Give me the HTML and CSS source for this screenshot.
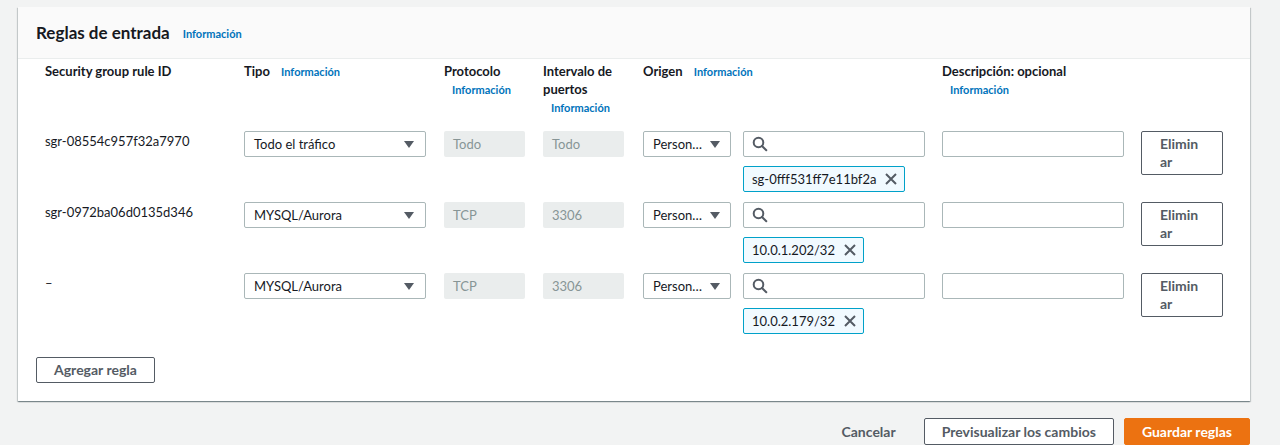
FILE: index.html
```html
<!DOCTYPE html>
<html lang="es">
<head>
<meta charset="utf-8">
<title>Reglas de entrada</title>
<link rel="stylesheet" href="styles.css">
</head>
<body>
<div class="page">
  <section class="card">
    <header class="card-header">
      <h2 class="title">Reglas de entrada</h2>
      <a class="info info-title">Información</a>
    </header>
    <div class="rules">
      <div class="grid head">
        <div class="h c-id">Security group rule ID</div>
        <div class="h c-type">Tipo <a class="info">Información</a></div>
        <div class="h c-proto">Protocolo <a class="info">Información</a></div>
        <div class="h c-port">Intervalo de puertos <a class="info">Información</a></div>
        <div class="h c-origin">Origen <a class="info">Información</a></div>
        <div class="h c-desc">Descripción: opcional <a class="info">Información</a></div>
        <div class="h c-del"></div>
      </div>

      <div class="grid row">
        <div class="c-id idtext">sgr-08554c957f32a7970</div>
        <div class="c-type"><div class="select wide"><span>Todo el tráfico</span><i class="caret"></i></div></div>
        <div class="c-proto"><div class="disabled">Todo</div></div>
        <div class="c-port"><div class="disabled">Todo</div></div>
        <div class="c-src"><div class="select narrow"><span>Person…</span><i class="caret"></i></div></div>
        <div class="c-search">
          <div class="search"><svg class="mag" viewBox="0 0 16 16" width="16" height="16"><circle cx="6.5" cy="6.5" r="4.8" fill="none" stroke="#545b64" stroke-width="2"/><path d="M10 10l4.3 4.3" stroke="#545b64" stroke-width="2" stroke-linecap="round"/></svg></div>
          <div class="tag">sg-0fff531ff7e11bf2a<svg class="x" viewBox="0 0 12 12" width="12" height="12"><path d="M1 1l10 10M11 1L1 11" stroke="#545b64" stroke-width="2"/></svg></div>
        </div>
        <div class="c-desc"><div class="input"></div></div>
        <div class="c-del"><button class="btn del">Eliminar</button></div>
      </div>

      <div class="grid row">
        <div class="c-id idtext">sgr-0972ba06d0135d346</div>
        <div class="c-type"><div class="select wide"><span>MYSQL/Aurora</span><i class="caret"></i></div></div>
        <div class="c-proto"><div class="disabled">TCP</div></div>
        <div class="c-port"><div class="disabled">3306</div></div>
        <div class="c-src"><div class="select narrow"><span>Person…</span><i class="caret"></i></div></div>
        <div class="c-search">
          <div class="search"><svg class="mag" viewBox="0 0 16 16" width="16" height="16"><circle cx="6.5" cy="6.5" r="4.8" fill="none" stroke="#545b64" stroke-width="2"/><path d="M10 10l4.3 4.3" stroke="#545b64" stroke-width="2" stroke-linecap="round"/></svg></div>
          <div class="tag">10.0.1.202/32<svg class="x" viewBox="0 0 12 12" width="12" height="12"><path d="M1 1l10 10M11 1L1 11" stroke="#545b64" stroke-width="2"/></svg></div>
        </div>
        <div class="c-desc"><div class="input"></div></div>
        <div class="c-del"><button class="btn del">Eliminar</button></div>
      </div>

      <div class="grid row">
        <div class="c-id idtext">–</div>
        <div class="c-type"><div class="select wide"><span>MYSQL/Aurora</span><i class="caret"></i></div></div>
        <div class="c-proto"><div class="disabled">TCP</div></div>
        <div class="c-port"><div class="disabled">3306</div></div>
        <div class="c-src"><div class="select narrow"><span>Person…</span><i class="caret"></i></div></div>
        <div class="c-search">
          <div class="search"><svg class="mag" viewBox="0 0 16 16" width="16" height="16"><circle cx="6.5" cy="6.5" r="4.8" fill="none" stroke="#545b64" stroke-width="2"/><path d="M10 10l4.3 4.3" stroke="#545b64" stroke-width="2" stroke-linecap="round"/></svg></div>
          <div class="tag">10.0.2.179/32<svg class="x" viewBox="0 0 12 12" width="12" height="12"><path d="M1 1l10 10M11 1L1 11" stroke="#545b64" stroke-width="2"/></svg></div>
        </div>
        <div class="c-desc"><div class="input"></div></div>
        <div class="c-del"><button class="btn del">Eliminar</button></div>
      </div>
    </div>
    <div class="card-foot">
      <button class="btn add">Agregar regla</button>
    </div>
  </section>
  <footer class="actions">
    <button class="btn link">Cancelar</button>
    <button class="btn normal">Previsualizar los cambios</button>
    <button class="btn primary">Guardar reglas</button>
  </footer>
</div>
</body>
</html>
```

FILE: styles.css
```css
* { box-sizing: border-box; }
html, body { margin: 0; padding: 0; }
body {
  background: #f2f3f3;
  font-family: Lato, "Open Sans", sans-serif;
  color: #16191f;
  font-size: 14px;
  line-height: 18px;
  overflow: hidden;
}
.page {
  width: 1250px;
  padding: 7px 0 0 18px;
}
.card {
  background: #fff;
  box-shadow: 0 1px 1px 0 rgba(0,28,36,.3), 1px 1px 1px 0 rgba(0,28,36,.15), -1px 1px 1px 0 rgba(0,28,36,.15);
}
.card-header {
  height: 52px;
  background: #fafafa;
  border-bottom: 1px solid #eaeded;
  display: flex;
  align-items: center;
  padding: 0 18px;
}
.title {
  margin: 0;
  font-size: 17px;
  font-weight: 700;
  line-height: 22px;
}
.info {
  color: #0073bb;
  font-size: 11px;
  font-weight: 700;
  display: inline-block;
  padding-left: 8px;
  line-height: 18px;
}
.info-title { padding-left: 13px; padding-top: 3px; }

.rules { padding: 3px 0 0 27px; }
.grid {
  display: grid;
  grid-template-columns: 199px 200px 99px 100px 100px 199px 199px 82px;
}
.h {
  font-weight: 700;
  font-size: 13px;
}
.head { height: 69px; }
.head .c-id { grid-column: 1; }
.head .c-type { grid-column: 2; width: 182px; }
.head .c-proto { grid-column: 3; width: 81px; }
.head .c-port { grid-column: 4; width: 81px; }
.head .c-origin { grid-column: 5 / span 2; }
.head .c-desc { grid-column: 7; width: 182px; }

.row { height: 61px; margin-bottom: 10px; }
.idtext { padding-top: 1px; font-size: 13px; color: #16191f; }

.select, .disabled, .input, .search {
  height: 26px;
  border-radius: 2px;
  display: flex;
  align-items: center;
  font-size: 13px;
}
.select {
  border: 1px solid #aab7b8;
  padding: 0 11px 0 9px;
  justify-content: space-between;
  color: #16191f;
}
.select.wide { width: 182px; }
.select.narrow { width: 88px; padding-right: 10px; }
.caret {
  width: 0; height: 0;
  border-left: 5px solid transparent;
  border-right: 5px solid transparent;
  border-top: 7px solid #545b64;
}
.disabled {
  width: 81px;
  background: #eaeded;
  color: #879596;
  padding-left: 9px;
}
.input { width: 182px; border: 1px solid #aab7b8; }
.search { width: 182px; border: 1px solid #aab7b8; padding-left: 8px; }
.c-search { display: flex; flex-direction: column; gap: 9px; align-items: flex-start; }
.tag {
  height: 26px;
  display: inline-flex;
  align-items: center;
  gap: 9px;
  padding: 0 7px 0 8px;
  background: #f1faff;
  border: 1px solid #00a1c9;
  border-radius: 2px;
  font-size: 13px;
  color: #16191f;
}

.btn {
  font-family: inherit;
  font-weight: 700;
  font-size: 14px;
  line-height: 18px;
  border-radius: 2px;
  cursor: pointer;
  background: #fff;
  color: #545b64;
  border: 1px solid #545b64;
}
.del {
  width: 82px;
  height: 44px;
  padding: 3px 18px;
  text-align: left;
  word-break: break-all;
}
.card-foot { padding: 13px 18px 18px; }
.add { height: 26px; padding: 0 17px; }

.actions {
  display: flex;
  justify-content: flex-end;
  margin-top: 17px;
  gap: 10px;
}
.btn.link { border-color: transparent; background: transparent; padding: 0 17px; height: 27px; }
.btn.normal { padding: 0 17px; height: 27px; }
.btn.primary { background: #ec7211; border-color: #ec7211; color: #fff; padding: 0 17px; height: 27px; }
```
